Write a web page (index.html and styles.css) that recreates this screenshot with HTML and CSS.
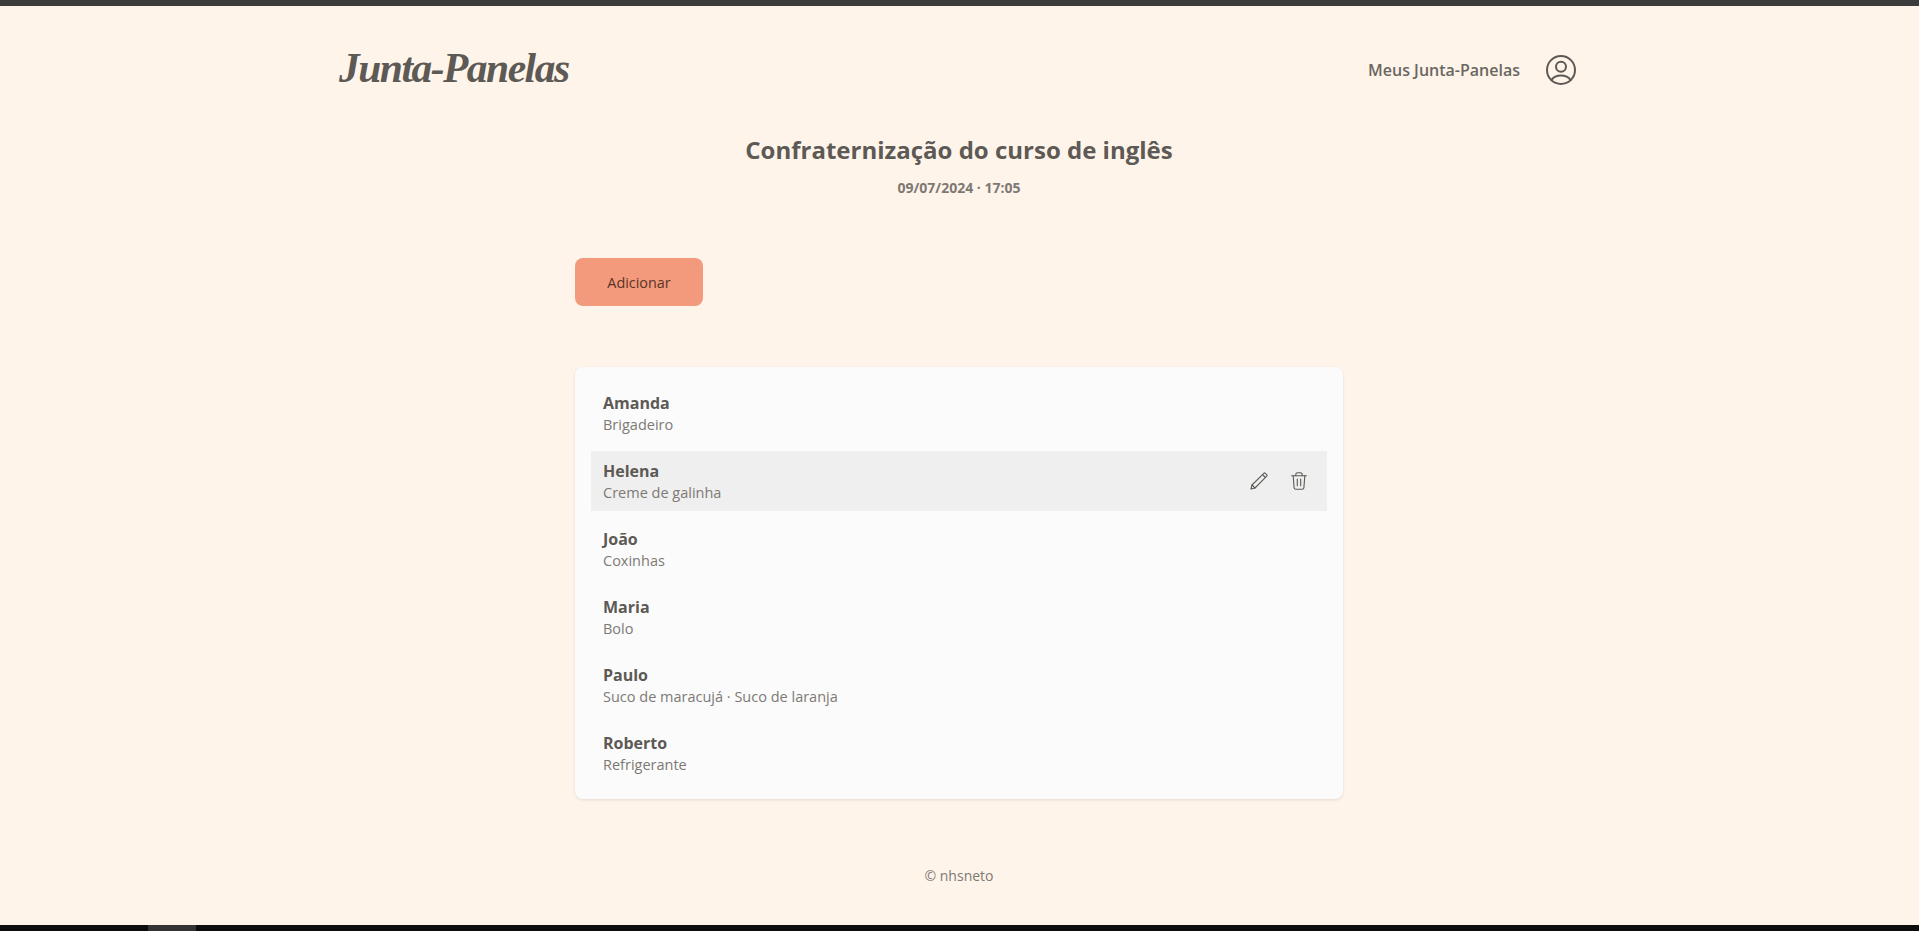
FILE: index.html
```html
<!DOCTYPE html>
<html lang="pt-BR">
<head>
    <meta charset="UTF-8">
    <meta name="viewport" content="width=device-width, initial-scale=1.0">
    <title>Junta-Panelas</title>
    <link rel="stylesheet" href="styles.css">
</head>
<body>
    <div class="page">
        <header class="header">
            <a class="logo" href="#">Junta-Panelas</a>
            <nav class="nav">
                <a class="nav-link" href="#">Meus Junta-Panelas</a>
                <svg class="user-icon" viewBox="0 0 24 24" fill="none" stroke="currentColor" stroke-width="1.5" stroke-linecap="round" stroke-linejoin="round">
                    <circle cx="12" cy="12" r="10.500"/>
                    <circle cx="12" cy="9.500" r="3.750"/>
                    <path d="M4.800 19.600c1.500-2.200 4-3.400 7.200-3.400s5.700 1.200 7.200 3.400"/>
                </svg>
            </nav>
        </header>

        <main class="main">
            <h1 class="title">Confraternização do curso de inglês</h1>
            <p class="date">09/07/2024 · 17:05</p>

            <div class="content">
                <button class="btn-add" type="button">Adicionar</button>

                <ul class="list">
                    <li class="item">
                        <div class="item-name">Amanda</div>
                        <div class="item-food">Brigadeiro</div>
                    </li>
                    <li class="item item-hover">
                        <div>
                            <div class="item-name">Helena</div>
                            <div class="item-food">Creme de galinha</div>
                        </div>
                        <div class="actions">
                            <svg class="icon-edit" viewBox="0 0 18 18" fill="none" stroke="currentColor" stroke-width="1.1" stroke-linecap="round" stroke-linejoin="round">
                                <path d="M1 17l1-4L13.800 1.300a1.100 1.100 0 0 1 1.500 0l1.400 1.400a1.100 1.100 0 0 1 0 1.500L5 16z"/>
                                <path d="M12.500 2.600l2.900 2.900"/>
                                <path d="M2 13l3 3"/>
                            </svg>
                            <svg class="icon-trash" viewBox="0 0 16 18" fill="none" stroke="currentColor" stroke-width="1.1" stroke-linecap="round" stroke-linejoin="round">
                                <path d="M.6 3.700h14.800"/>
                                <path d="M4.800 3.700V2.600A1.900 1.900 0 0 1 6.700.7h2.600a1.900 1.900 0 0 1 1.900 1.900v1.100"/>
                                <path d="M2.200 3.700l.9 12a1.700 1.700 0 0 0 1.700 1.600h6.400a1.700 1.700 0 0 0 1.700-1.600l.9-12"/>
                                <path d="M6.300 7v6.800"/>
                                <path d="M9.700 7v6.800"/>
                            </svg>
                        </div>
                    </li>
                    <li class="item">
                        <div class="item-name">João</div>
                        <div class="item-food">Coxinhas</div>
                    </li>
                    <li class="item">
                        <div class="item-name">Maria</div>
                        <div class="item-food">Bolo</div>
                    </li>
                    <li class="item">
                        <div class="item-name">Paulo</div>
                        <div class="item-food">Suco de maracujá · Suco de laranja</div>
                    </li>
                    <li class="item">
                        <div class="item-name">Roberto</div>
                        <div class="item-food">Refrigerante</div>
                    </li>
                </ul>
            </div>
        </main>

        <footer class="footer">© nhsneto</footer>
    </div>

    <div class="bottom-bar">
        <div class="bottom-thumb"></div>
    </div>
</body>
</html>
```

FILE: styles.css
```css
* {
    box-sizing: border-box;
}
html, body {
    height: 100%;
}
body {
    margin: 0;
    display: flex;
    flex-direction: column;
    height: 931px;
    overflow: hidden;
    font-family: "Open Sans", sans-serif;
    background-color: #fff4ea;
    color: #5d5955;
}
.page {
    flex: 1;
    border-top: 6px solid #3c3c3c;
    padding-right: 1px;
}
.header {
    width: 1240px;
    margin: 0 auto;
    height: 128px;
    display: flex;
    align-items: center;
    justify-content: space-between;
}
.logo {
    margin-bottom: 4px;
    font-family: "Liberation Serif", cursive;
    font-style: italic;
    font-weight: 700;
    font-size: 41.5px;
    letter-spacing: -1.5px;
    color: #5d5955;
    text-decoration: none;
}
.nav {
    display: flex;
    align-items: center;
    gap: 25px;
}
.nav-link {
    font-size: 16px;
    font-weight: 600;
    color: #6a6662;
    text-decoration: none;
}
.user-icon {
    width: 32px;
    height: 32px;
    margin-right: 2px;
}
.main {
    display: flex;
    flex-direction: column;
    align-items: center;
}
.title {
    margin: 0;
    font-size: 24px;
    line-height: 32px;
    font-weight: 700;
    color: #5d5955;
}
.date {
    margin: 12px 0 0;
    font-size: 14px;
    line-height: 20px;
    font-weight: 700;
    color: #7d7974;
}
.content {
    width: 768px;
    margin-top: 60px;
}
.btn-add {
    display: block;
    width: 128px;
    height: 48px;
    border: none;
    border-radius: 8px;
    background-color: #f39a7d;
    color: #5b3327;
    font-family: inherit;
    font-size: 14.4px;
    font-weight: 500;
    cursor: pointer;
}
.list {
    list-style: none;
    margin: 61px 0 0;
    padding: 16px;
    display: flex;
    flex-direction: column;
    gap: 8px;
    background-color: #fbfbfb;
    border-radius: 8px;
    box-shadow: 0 1px 3px rgba(0, 0, 0, 0.1);
}
.item {
    height: 60px;
    padding: 0 12px;
    display: flex;
    flex-direction: column;
    justify-content: center;
}
.item-hover {
    flex-direction: row;
    align-items: center;
    justify-content: space-between;
    background-color: #efefef;
}
.item-name {
    font-size: 16px;
    line-height: 24px;
    font-weight: 700;
    color: #5d5955;
}
.item-food {
    font-size: 14.5px;
    line-height: 20px;
    color: #7d7974;
}
.actions {
    display: flex;
    align-items: center;
    gap: 23px;
    margin-right: 8px;
}
.icon-edit {
    width: 18px;
    height: 18px;
}
.icon-trash {
    width: 16px;
    height: 18px;
}
.footer {
    margin-top: 67px;
    text-align: center;
    font-size: 14px;
    line-height: 20px;
    color: #7d7974;
}
.bottom-bar {
    height: 6px;
    background-color: #0d0d0d;
}
.bottom-thumb {
    width: 48px;
    height: 6px;
    margin-left: 148px;
    background-color: #333333;
}
```
